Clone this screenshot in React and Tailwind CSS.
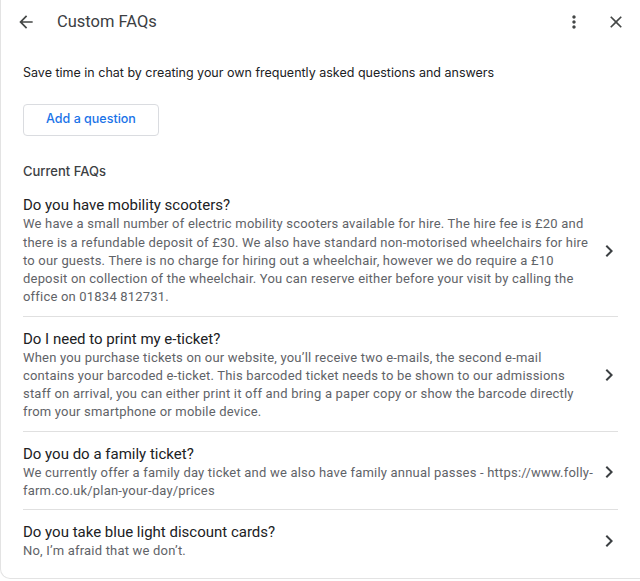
const faqs = [
  {
    q: 'Do you have mobility scooters?',
    a: 'We have a small number of electric mobility scooters available for hire. The hire fee is £20 and there is a refundable deposit of £30. We also have standard non-motorised wheelchairs for hire to our guests. There is no charge for hiring out a wheelchair, however we do require a £10 deposit on collection of the wheelchair. You can reserve either before your visit by calling the office on 01834 812731.',
  },
  {
    q: 'Do I need to print my e-ticket?',
    a: 'When you purchase tickets on our website, you’ll receive two e-mails, the second e-mail contains your barcoded e-ticket. This barcoded ticket needs to be shown to our admissions staff on arrival, you can either print it off and bring a paper copy or show the barcode directly from your smartphone or mobile device.',
  },
  {
    q: 'Do you do a family ticket?',
    a: 'We currently offer a family day ticket and we also have family annual passes - https://www.folly-farm.co.uk/plan-your-day/prices',
  },
  {
    q: 'Do you take blue light discount cards?',
    a: 'No, I’m afraid that we don’t.',
  },
]

function Icon({ d, className }) {
  return (
    <svg viewBox="0 0 24 24" className={className} fill="currentColor">
      <path d={d} />
    </svg>
  )
}

const ARROW = 'M20 11H7.83l5.59-5.59L12 4l-8 8 8 8 1.41-1.41L7.83 13H20v-2z'
const MORE = 'M12 8c1.1 0 2-.9 2-2s-.9-2-2-2-2 .9-2 2 .9 2 2 2zm0 2c-1.1 0-2 .9-2 2s.9 2 2 2 2-.9 2-2-.9-2-2-2zm0 6c-1.1 0-2 .9-2 2s.9 2 2 2 2-.9 2-2-.9-2-2-2z'
const CLOSE = 'M19 6.41L17.59 5 12 10.59 6.41 5 5 6.41 10.59 12 5 17.59 6.41 19 12 13.41 17.59 19 19 17.59 13.41 12z'
const CHEVRON = 'M8.59 16.59L13.17 12 8.59 7.41 10 6l6 6-6 6-1.41-1.41z'

export default function App() {
  return (
    <div className="w-[640px] h-[581px] bg-white overflow-hidden">
      <div className="h-[579px] border-l border-b border-[#e3e3e3] rounded-bl-[10px] font-['Roboto',sans-serif]">
        <div className="flex items-center h-[44px] pl-[15px] pr-[14px]">
          <Icon d={ARROW} className="w-[20px] h-[20px] text-[#444746]" />
          <div className="ml-[21px] text-[16.5px] text-[#3c4043]">Custom FAQs</div>
          <div className="flex-1" />
          <Icon d={MORE} className="w-[20px] h-[20px] text-[#444746]" />
          <Icon d={CLOSE} className="ml-[22px] w-[20px] h-[20px] text-[#444746]" />
        </div>

        <div className="px-[22px] pt-[20px]">
          <p className="font-['Inter',sans-serif] text-[12.5px] text-[#202124]">
            Save time in chat by creating your own frequently asked questions and answers
          </p>
          <button className="mt-[21px] h-[32px] w-[136px] border border-[#dadce0] rounded-[4px] font-['Inter',sans-serif] text-[12.5px] font-medium text-[#1a73e8]">
            Add a question
          </button>
          <h2 className="mt-[26px] font-['Inter',sans-serif] text-[13px] font-medium text-[#3c4043]">Current FAQs</h2>

          <div className="mt-[2px]">
            {faqs.map((f, i) => (
              <div
                key={i}
                className={`flex items-center gap-[4px] pt-[12px] pb-[9px] ${i < faqs.length - 1 ? 'border-b border-[#e0e0e0]' : ''}`}
              >
                <div className="flex-1">
                  <div className="text-[15px] leading-[20px] text-[#202124]">{f.q}</div>
                  <div className="text-[13px] leading-[18.25px] text-[#5f6368] tracking-[0.2px]">{f.a}</div>
                </div>
                <Icon d={CHEVRON} className="w-[24px] h-[24px] text-[#3c4043] shrink-0 -mr-[3px]" />
              </div>
            ))}
          </div>
        </div>
      </div>
    </div>
  )
}
